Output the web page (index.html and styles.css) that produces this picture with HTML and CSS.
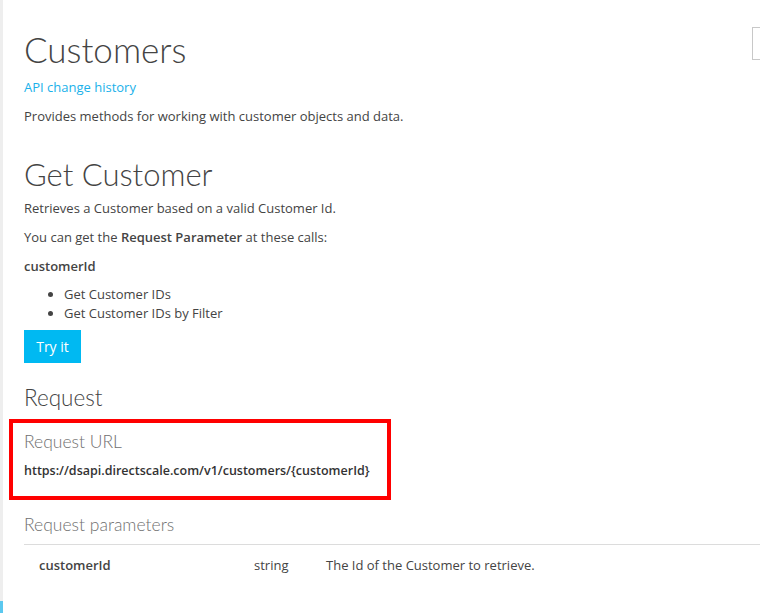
FILE: index.html
```html
<!DOCTYPE html>
<html>
<head>
<meta charset="utf-8">
<link rel="stylesheet" href="styles.css">
</head>
<body>
<div class="page">
  <div class="rail"><div class="rail-fill"></div><div class="rail-mark"></div></div>
  <main class="content">
    <header class="top">
      <h1 class="title">Customers</h1>
      <div class="search"></div>
    </header>
    <a class="link" href="#">API change history</a>
    <p class="text desc">Provides methods for working with customer objects and data.</p>

    <h2 class="op-title">Get Customer</h2>
    <p class="text">Retrieves a Customer based on a valid Customer Id.</p>
    <p class="text">You can get the <strong>Request Parameter</strong> at these calls:</p>
    <p class="text"><strong>customerId</strong></p>
    <ul class="calls">
      <li>Get Customer IDs</li>
      <li>Get Customer IDs by Filter</li>
    </ul>
    <button class="try">Try it</button>

    <h3 class="section">Request</h3>
    <div class="highlight">
      <h4 class="sub">Request URL</h4>
      <div class="url">https://dsapi.directscale.com/v1/customers/{customerId}</div>
    </div>

    <h4 class="sub params-title">Request parameters</h4>
    <div class="params">
      <div class="param-row">
        <span class="p-name">customerId</span>
        <span class="p-type">string</span>
        <span class="p-desc">The Id of the Customer to retrieve.</span>
      </div>
    </div>
  </main>
</div>
</body>
</html>
```
FILE: styles.css
```css
html, body {
  margin: 0;
  padding: 0;
  background: #fff;
  overflow: hidden;
}
body {
  font-family: "Open Sans", "Noto Sans", sans-serif;
  color: #444;
  font-size: 13px;
}
.page {
  display: flex;
  width: 760px;
  height: 613px;
}
.rail {
  width: 3px;
  flex-shrink: 0;
  display: flex;
  flex-direction: column;
}
.rail-fill { flex: 1; background: #eeeeee; }
.rail-mark { height: 12px; background: #5bc8ef; }
.content {
  flex: 1;
  padding-left: 21px;
  min-width: 0;
}
.top {
  display: flex;
  justify-content: space-between;
  align-items: flex-start;
}
.title, .op-title, .section, .sub {
  font-family: "Lato", sans-serif;
  font-weight: 300;
}
.title {
  margin: 25px 0 0;
  font-size: 35px;
  line-height: 48px;
  color: #444;
}
.search {
  width: 40px;
  height: 31px;
  border: 1px solid #c8c8c8;
  margin-top: 27px;
  margin-right: -34px;
  flex-shrink: 0;
}
.link {
  display: block;
  margin-top: 4px;
  color: #1ab1ea;
  text-decoration: none;
  line-height: 20px;
}
.text {
  margin: 0;
  line-height: 20px;
}
.desc { margin-top: 9px; }
.text + .text { margin-top: 9px; }
strong { font-weight: 600; }
.op-title {
  margin: 28px 0 4px;
  font-size: 31px;
  line-height: 40px;
  color: #444;
}
.calls {
  margin: 9px 0 0;
  padding-left: 40px;
  line-height: 19px;
}
.try {
  margin-top: 7px;
  display: block;
  width: 57px;
  height: 33px;
  border: none;
  background: #00b9f2;
  color: #fff;
  font-family: inherit;
  font-size: 14px;
  padding: 0;
}
.section {
  margin: 20px 0 0;
  font-size: 22.5px;
  line-height: 30px;
  color: #444;
}
.highlight {
  margin: 6px 0 0 -15px;
  width: 352px;
  border: 4px solid #ff0000;
  padding: 4px 11px 15px;
}
.sub {
  margin: 0;
  font-size: 17.5px;
  line-height: 30px;
  color: #707070;
}
.url {
  margin-top: 4px;
  font-weight: 600;
  font-size: 12.5px;
  line-height: 20px;
  color: #333;
}
.params-title {
  margin-top: 10px;
  padding-bottom: 4px;
  border-bottom: 1px solid #dcdcdc;
}
.param-row {
  display: flex;
  padding: 10px 0 0 15px;
  line-height: 20px;
}
.p-name { width: 215px; font-weight: 600; }
.p-type { width: 72px; }
.p-desc { flex: 1; }
```
